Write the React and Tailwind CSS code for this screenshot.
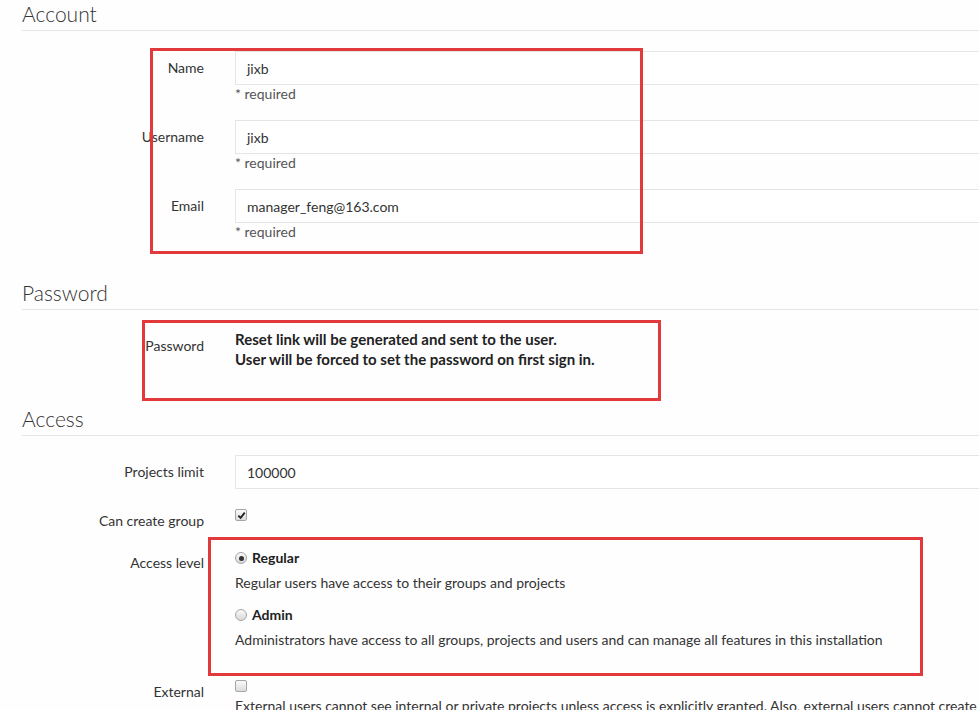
import React from "react";

const font = { fontFamily: "Lato, 'Open Sans', sans-serif" };

function Heading({ children }) {
  return (
    <div className="border-b border-[#e5e5e5] pb-[3px] text-[21px] font-light leading-[27px] text-[#333]">
      {children}
    </div>
  );
}

function Label({ children, className = "" }) {
  return (
    <div className={"w-[182px] shrink-0 text-right text-[14px] leading-[18px] text-[#333] " + className}>
      {children}
    </div>
  );
}

function TextField({ label, value, mt }) {
  return (
    <div className={"flex " + mt}>
      <Label className="pt-[8px]">{label}</Label>
      <div className="ml-[31px] flex-1">
        <div className="flex h-[34px] items-center border border-[#e5e5e5] bg-white pl-[11px] text-[14px] text-[#333]">
          {value}
        </div>
        <div className="text-[14px] leading-[18px] text-[#555]">* required</div>
      </div>
    </div>
  );
}

function Checkbox({ checked }) {
  return (
    <span className="flex h-[12px] w-[12px] items-center justify-center rounded-[2px] border border-[#a6a6a6] bg-gradient-to-b from-[#fafafa] to-[#dcdcdc]">
      {checked && (
        <svg width="9" height="9" viewBox="0 0 10 10">
          <path d="M1.5 5.2 L4 7.6 L8.6 1.8" fill="none" stroke="#222" strokeWidth="2" />
        </svg>
      )}
    </span>
  );
}

function Radio({ checked }) {
  return (
    <span className="flex h-[12px] w-[12px] items-center justify-center rounded-full border border-[#a6a6a6] bg-gradient-to-b from-[#fafafa] to-[#d8d8d8]">
      {checked && <span className="h-[5px] w-[5px] rounded-full bg-[#333]" />}
    </span>
  );
}

export default function App() {
  return (
    <div className="relative h-[710px] w-[979px] overflow-hidden bg-[#fefefe]" style={font}>
      <div className="w-[1000px] pl-[22px]">
        <Heading>Account</Heading>
        <TextField label="Name" value="jixb" mt="mt-[20px]" />
        <TextField label="Username" value="jixb" mt="mt-[17px]" />
        <TextField label="Email" value="manager_feng@163.com" mt="mt-[17px]" />

        <div className="mt-[38px]">
          <Heading>Password</Heading>
        </div>
        <div className="mt-[19px] flex">
          <Label className="pt-[8px]">Password</Label>
          <div className="ml-[31px] text-[15px] font-bold leading-[20px] text-[#222]">
            <div>Reset link will be generated and sent to the user.</div>
            <div>User will be forced to set the password on first sign in.</div>
          </div>
        </div>

        <div className="mt-[36px]">
          <Heading>Access</Heading>
        </div>
        <div className="mt-[19px] flex">
          <Label className="pt-[8px]">Projects limit</Label>
          <div className="ml-[31px] flex-1">
            <div className="flex h-[34px] items-center border border-[#e5e5e5] bg-white pl-[11px] text-[14px] text-[#333]">
              100000
            </div>
          </div>
        </div>
        <div className="mt-[20px] flex">
          <Label className="pt-[3px]">Can create group</Label>
          <div className="ml-[31px]">
            <Checkbox checked />
          </div>
        </div>
        <div className="mt-[19px] flex">
          <Label className="pt-[5px]">Access level</Label>
          <div className="ml-[31px] text-[14px] leading-[18px] text-[#333]">
            <div className="flex items-center gap-[5px]">
              <Radio checked />
              <span className="font-bold text-[#222]">Regular</span>
            </div>
            <div className="mt-[7px]">Regular users have access to their groups and projects</div>
            <div className="mt-[14px] flex items-center gap-[5px]">
              <Radio />
              <span className="font-bold text-[#222]">Admin</span>
            </div>
            <div className="mt-[7px]">
              Administrators have access to all groups, projects and users and can manage all features in this installation
            </div>
          </div>
        </div>
        <div className="mt-[31px] flex">
          <Label className="pt-[3px]">External</Label>
          <div className="ml-[31px] whitespace-nowrap text-[14px] leading-[18px] text-[#333]">
            <Checkbox />
            <div className="mt-[5px]">
              External users cannot see internal or private projects unless access is explicitly granted. Also, external users cannot create groups or projects.
            </div>
          </div>
        </div>
      </div>

      <div className="absolute left-[150px] top-[48px] h-[206px] w-[493px] border-[3px] border-[#e2393d]" />
      <div className="absolute left-[142px] top-[320px] h-[81px] w-[519px] border-[3px] border-[#e2393d]" />
      <div className="absolute left-[208px] top-[537px] h-[139px] w-[715px] border-[3px] border-[#e2393d]" />
    </div>
  );
}
